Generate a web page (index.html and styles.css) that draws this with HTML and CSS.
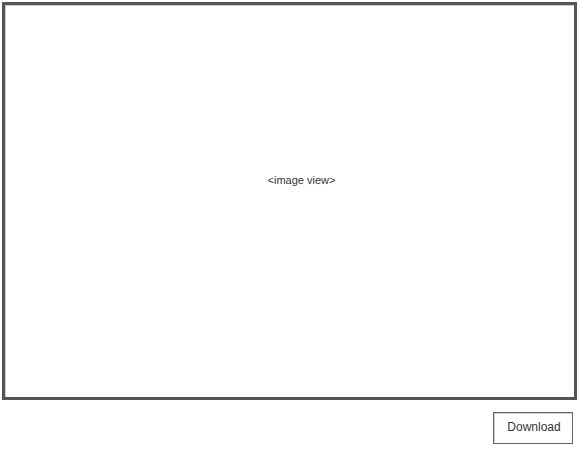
FILE: index.html
```html
<!DOCTYPE html>
<html>
<head>
<meta charset="utf-8">
<link rel="stylesheet" href="styles.css">
</head>
<body>
<div class="page">
  <div class="image-view"><span class="label">&lt;image view&gt;</span></div>
  <div class="actions"><button class="btn">Download</button></div>
</div>
</body>
</html>
```
FILE: styles.css
```css
html, body { margin: 0; padding: 0; background: #fff; }
body { font-family: "Liberation Sans", Arial, sans-serif; }
.page { width: 579px; height: 449px; padding: 2px; box-sizing: border-box; display: flex; flex-direction: column; }
.image-view {
  height: 398px;
  box-sizing: border-box;
  border: 3px solid #555;
  box-shadow: inset 1px 1px 0 #ccc;
  display: flex; align-items: center; justify-content: center;
}
.label { font-size: 11px; color: #333; margin: 0 0 42px 24px; }
.actions { display: flex; justify-content: flex-end; padding: 12px 4px 0 0; }
.btn {
  width: 80px; height: 32px; box-sizing: border-box;
  border: 1px solid #666; background: #fff;
  box-shadow: inset 1px 1px 0 #ccc;
  font-family: "Liberation Sans", Arial, sans-serif; font-size: 12px; color: #333;
  padding: 0 0 2px 2px; border-radius: 0;
}
```
